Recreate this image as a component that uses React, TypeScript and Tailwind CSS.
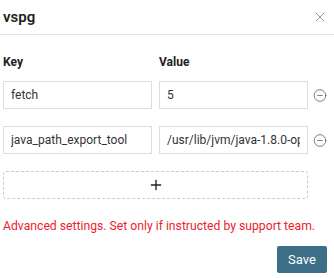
import { X, CircleMinus, Plus } from 'lucide-react';

const rows = [
  { key: 'fetch', value: '5' },
  { key: 'java_path_export_tool', value: '/usr/lib/jvm/java-1.8.0-openjdk' },
];

export default function App() {
  return (
    <div className="w-[334px] h-[278px] bg-white overflow-hidden font-['Roboto',sans-serif] text-[#333]">
      <div className="h-[35px] flex items-center justify-between pl-[3px] pr-[6px] border-b border-[#e5e5e5]">
        <h2 className="text-[15px] font-semibold text-[#222]">vspg</h2>
        <X size={16} strokeWidth={1.2} className="text-[#777]" />
      </div>

      <div className="pl-[3px] pr-[7px]">
        <div className="flex gap-[7px] mt-[18px] text-[12px] font-bold text-[#222]">
          <div className="w-[149px]">Key</div>
          <div>Value</div>
        </div>

        <div className="mt-[10px] flex flex-col gap-[17px]">
          {rows.map((row) => (
            <div key={row.key} className="flex items-center">
              <input
                readOnly
                value={row.key}
                className="w-[149px] h-[28px] border border-[#ddd] px-[7px] text-[12px] text-[#333] outline-none"
              />
              <input
                readOnly
                value={row.value}
                className="ml-[7px] w-[149px] h-[28px] border border-[#ddd] px-[7px] text-[12px] text-[#333] outline-none"
              />
              <CircleMinus size={15} strokeWidth={1.3} className="ml-[5px] text-[#555]" />
            </div>
          ))}
        </div>

        <button className="mt-[17px] w-[305px] h-[28px] border border-dashed border-[#ccc] rounded-[3px] flex items-center justify-center">
          <Plus size={16} strokeWidth={2} className="text-[#222]" />
        </button>

        <p className="mt-[18px] text-[12.2px] text-[#ee1c2e]">
          Advanced settings. Set only if instructed by support team.
        </p>

        <div className="flex justify-end mt-[11px]">
          <button className="w-[50px] h-[27px] bg-[#3d6e87] text-white text-[13px] rounded-[2px]">
            Save
          </button>
        </div>
      </div>
    </div>
  );
}
